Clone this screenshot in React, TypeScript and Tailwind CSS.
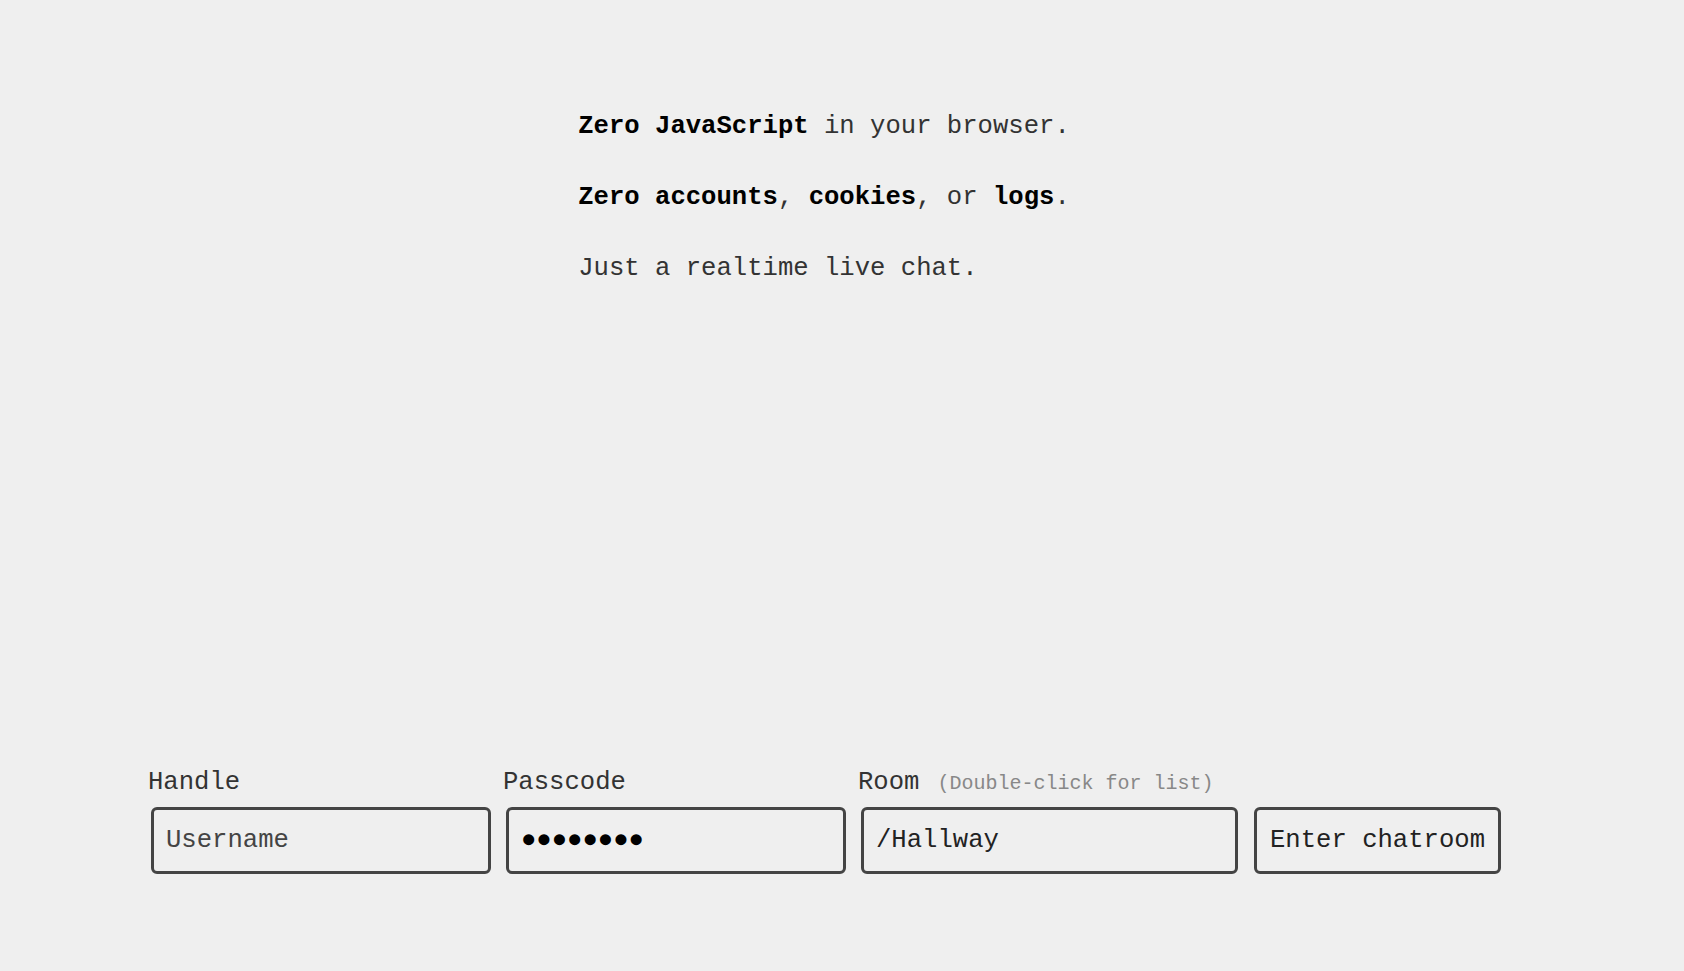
import React from "react";

const mono = "font-['Liberation_Mono','Courier_New',monospace]";

const Field = ({
  label,
  hint,
  className,
  children,
}: {
  label?: string;
  hint?: string;
  className?: string;
  children: React.ReactNode;
}) => {
  return (
    <div className={`flex flex-col ${className ?? ""}`}>
      <label className="h-[30px] leading-[30px] text-[25.6px] text-[#333] whitespace-nowrap">
        {label}
        {hint && (
          <span className="ml-[18px] text-[20px] text-[#888]">{hint}</span>
        )}
      </label>
      <div className="mt-[9px] ml-[3px]">{children}</div>
    </div>
  );
};

const inputCls =
  "h-[67px] w-full rounded-md border-[3px] border-[#444] bg-transparent px-[12px] text-[25.6px] leading-[30px] text-[#222] placeholder:text-[#444] outline-none";

export default function App() {
  return (
    <div
      className={`${mono} flex h-screen w-full flex-col bg-[#efefef] text-[#222]`}
    >
      {/* tagline */}
      <div className="flex-1 pt-[112px]">
        <div className="ml-[148px] w-[1352px]">
          <div className="mx-auto flex w-fit flex-col gap-[41px] text-[25.6px] leading-[30px] text-[#333]">
            <p>
              <b className="text-black">Zero JavaScript</b> in your browser.
            </p>
            <p>
              <b className="text-black">Zero accounts</b>,{" "}
              <b className="text-black">cookies</b>, or{" "}
              <b className="text-black">logs</b>.
            </p>
            <p>Just a realtime live chat.</p>
          </div>
        </div>
      </div>

      {/* login form */}
      <form
        className="flex items-end gap-[12px] pl-[148px] pb-[97px]"
        onSubmit={(e) => e.preventDefault()}
      >
        <Field label="Handle" className="w-[343px]">
          <input className={inputCls} placeholder="Username" />
        </Field>
        <Field label="Passcode" className="w-[343px]">
          <input
            className={`${inputCls} text-black tracking-normal`}
            type="text"
            readOnly
            value="●●●●●●●●"
          />
        </Field>
        <Field label="Room" hint="(Double-click for list)" className="w-[380px]">
          <input className={inputCls} defaultValue="/Hallway" />
        </Field>
        <button
          type="submit"
          className="ml-[4px] h-[67px] w-[247px] rounded-md border-[3px] border-[#444] bg-transparent px-[12px] text-[25.6px] leading-[30px] text-[#222] whitespace-nowrap"
        >
          Enter chatroom
        </button>
      </form>
    </div>
  );
}
